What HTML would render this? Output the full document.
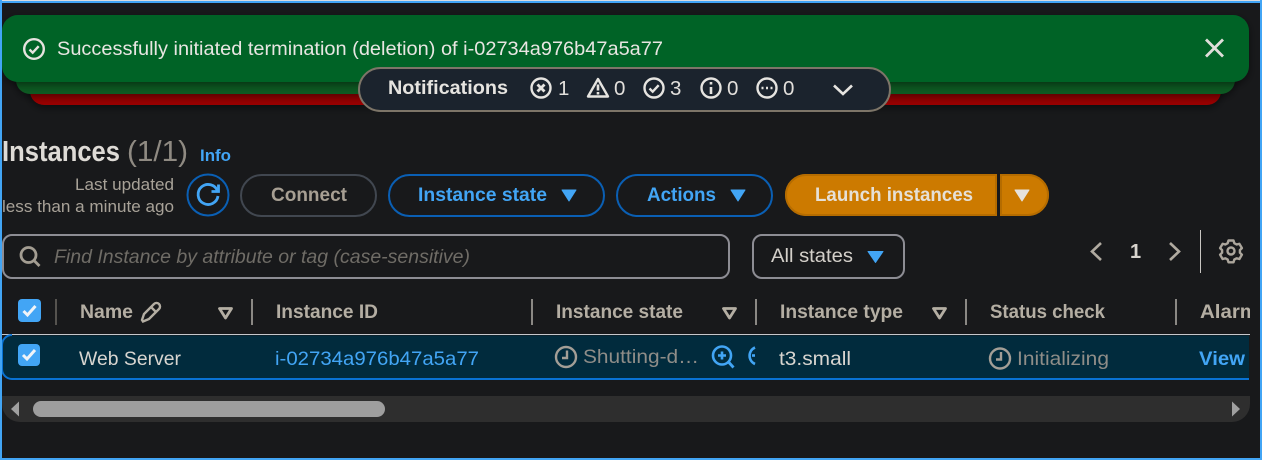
<!DOCTYPE html>
<html><head><meta charset="utf-8"><style>
html,body{margin:0;padding:0;background:#18191b;width:1262px;height:460px;overflow:hidden}
svg{display:block;position:absolute;left:0;top:0}
text{font-family:"Liberation Sans",sans-serif;font-size:19.5px}
.b{font-weight:700}
</style></head><body>
<svg width="1262" height="460" viewBox="0 0 1262 460" xmlns="http://www.w3.org/2000/svg">
<defs>
<filter id="s" x="-5%" y="-30%" width="110%" height="170%"><feDropShadow dx="0" dy="3" stdDeviation="4" flood-color="#000" flood-opacity=".45"/></filter>
<clipPath id="tbl"><rect x="0" y="290" width="1250" height="100"/></clipPath>
</defs>
<rect width="1262" height="460" fill="#18191b"/>
<!-- stacked flashes -->
<rect x="30" y="50" width="1191" height="55" rx="14" fill="#990000" filter="url(#s)"/>
<rect x="16" y="40" width="1219" height="54" rx="14" fill="#0b5a24" filter="url(#s)"/>
<rect x="2" y="15" width="1247" height="67" rx="16" fill="#016428" filter="url(#s)"/>
<circle cx="34" cy="49" r="9.800" fill="none" stroke="#e6e3df" stroke-width="2.400"/>
<path d="M29.500 49.500l3.200 3.200 6-6.500" fill="none" stroke="#e6e3df" stroke-width="2.400"/>
<text x="57" y="55" fill="#e8e6e2" textLength="606" lengthAdjust="spacingAndGlyphs">Successfully initiated termination (deletion) of i-02734a976b47a5a77</text>
<path d="M1206 39.500l17 17M1223 39.500l-17 17" stroke="#e0deda" stroke-width="2.800" fill="none"/>
<!-- notifications pill -->
<rect x="359" y="68" width="531" height="43" rx="21.500" fill="#1b232d" stroke="#7d7568" stroke-width="2"/>
<text class="b" x="388" y="94" fill="#e6e4e0" textLength="120" lengthAdjust="spacingAndGlyphs">Notifications</text>
<g fill="none" stroke="#e6e4e0" stroke-width="2.400">
<circle cx="541" cy="88" r="9.500"/><path d="M537.500 84.500l7 7M544.500 84.500l-7 7" stroke-width="2.800"/>
<path d="M598 79l10 17.500h-20z" stroke-linejoin="round"/><path d="M598 84.500v6M598 92v2.500" stroke-width="2.600"/>
<circle cx="654" cy="88" r="9.500"/><path d="M649.500 88.500l3.200 3.200 6-6.500"/>
<circle cx="711" cy="88" r="9.500"/><path d="M711 87v7M711 82v2.500" stroke-width="2.600"/>
<circle cx="767" cy="88" r="9.500"/><path d="M761.500 88h2M766 88h2M770.500 88h2" stroke-width="2.600"/>
<path d="M834 85.500l9 8.500 9-8.500" stroke-width="2.600"/>
</g>
<g fill="#e2dfdb"><text x="558" y="95" style="font-size:20.500px">1</text><text x="614" y="95" style="font-size:20.500px">0</text><text x="670" y="95" style="font-size:20.500px">3</text><text x="727" y="95" style="font-size:20.500px">0</text><text x="783" y="95" style="font-size:20.500px">0</text></g>
<!-- heading -->
<text class="b" x="2" y="161" fill="#dedbd6" style="font-size:29px" textLength="118" lengthAdjust="spacingAndGlyphs">Instances</text>
<text x="127" y="161" fill="#8f8a82" style="font-size:29px" textLength="61" lengthAdjust="spacingAndGlyphs">(1/1)</text>
<text class="b" x="200" y="161" fill="#42a5f5" style="font-size:17px" textLength="31" lengthAdjust="spacingAndGlyphs">Info</text>
<text x="75" y="190" fill="#a8a298" style="font-size:17px" textLength="99" lengthAdjust="spacingAndGlyphs">Last updated</text>
<text x="2" y="212" fill="#a8a298" style="font-size:17px" textLength="172" lengthAdjust="spacingAndGlyphs">less than a minute ago</text>
<!-- buttons -->
<circle cx="208" cy="195" r="20.500" fill="none" stroke="#0a5fb4" stroke-width="2"/>
<path d="M217.500 191a10 10 0 1 0 .5 5" fill="none" stroke="#42a5f5" stroke-width="2.800"/>
<path d="M218.500 184.500v7h-7" fill="none" stroke="#42a5f5" stroke-width="2.800"/>
<rect x="241" y="175" width="135" height="41" rx="20.500" fill="none" stroke="#414750" stroke-width="2"/>
<text class="b" x="271" y="201" fill="#a79f93" textLength="76" lengthAdjust="spacingAndGlyphs">Connect</text>
<rect x="389" y="175" width="215" height="41" rx="20.500" fill="none" stroke="#0a5fb4" stroke-width="2"/>
<text class="b" x="418" y="201" fill="#42a5f5" textLength="129" lengthAdjust="spacingAndGlyphs">Instance state</text>
<path d="M562 190h14l-7 11z" fill="#42a5f5" stroke="#42a5f5" stroke-linejoin="round"/>
<rect x="617" y="175" width="155" height="41" rx="20.500" fill="none" stroke="#0a5fb4" stroke-width="2"/>
<text class="b" x="647" y="201" fill="#42a5f5" textLength="69" lengthAdjust="spacingAndGlyphs">Actions</text>
<path d="M731 190h14l-7 11z" fill="#42a5f5" stroke="#42a5f5" stroke-linejoin="round"/>
<path d="M997 174h-191a21 21 0 0 0 0 42h191z" fill="#cc7a00"/>
<path d="M1000 174h28a21 21 0 0 1 0 42h-28z" fill="#cc7a00"/>
<path d="M996 175h-190a20 20 0 0 0 0 40h190zM1001 175h27a20 20 0 0 1 0 40h-27z" fill="none" stroke="#b56c00" stroke-width="2"/>
<text class="b" x="815" y="201" fill="#e6e0d6" textLength="158" lengthAdjust="spacingAndGlyphs">Launch instances</text>
<path d="M1015 190h14l-7 11z" fill="#e6e2dc" stroke="#e6e2dc" stroke-linejoin="round"/>
<!-- search row -->
<rect x="3" y="235" width="726" height="43" rx="9" fill="none" stroke="#8d8d94" stroke-width="2"/>
<circle cx="28.500" cy="255" r="7.500" fill="none" stroke="#a39d92" stroke-width="2.800"/>
<path d="M34 260.500l5.500 5.500" stroke="#a39d92" stroke-width="2.800" fill="none"/>
<text x="54" y="263" fill="#6f6c66" font-style="italic" textLength="416" lengthAdjust="spacingAndGlyphs">Find Instance by attribute or tag (case-sensitive)</text>
<rect x="753" y="235" width="151" height="43" rx="9" fill="none" stroke="#8d8d94" stroke-width="2"/>
<text x="771" y="262" fill="#d4d0ca" textLength="82" lengthAdjust="spacingAndGlyphs">All states</text>
<path d="M868 251.500h15l-7.500 11z" fill="#42a5f5" stroke="#42a5f5" stroke-linejoin="round"/>
<!-- pagination -->
<path d="M1101 243l-9 8.500 9 8.500M1170 243l9 8.500-9 8.500" fill="none" stroke="#b0aaa0" stroke-width="2.600"/>
<text class="b" x="1130" y="258" fill="#d8d4ce" style="font-size:20px">1</text>
<rect x="1200" y="230" width="1" height="43" fill="#c8c6c2"/>
<g fill="none" stroke="#aca69c" stroke-width="2.400">
<circle cx="1231" cy="251" r="3.500"/>
<path d="M1228.500 241.500h5l.8 2.700 2.300 1.300 2.800-.7 2.500 4.300-2 2 0 2.600 2 2-2.500 4.300-2.800-.7-2.300 1.300-.8 2.700h-5l-.8-2.700-2.300-1.300-2.800.7-2.500-4.300 2-2 0-2.600-2-2 2.500-4.300 2.800.7 2.300-1.300z" stroke-linejoin="round" transform="translate(0,-1)"/>
</g>
<!-- table header -->
<g clip-path="url(#tbl)">
<rect x="18" y="299" width="23" height="23" rx="4" fill="#42a5f5"/>
<path d="M23.500 311l4 4 8-9" fill="none" stroke="#f0f4f8" stroke-width="3"/>
<g fill="#55534f"><rect x="55" y="299" width="2" height="26"/></g>
<g fill="#8a8884"><rect x="251" y="299" width="2" height="26"/><rect x="531" y="299" width="2" height="26"/><rect x="755" y="299" width="2" height="26"/><rect x="965" y="299" width="2" height="26"/><rect x="1175" y="299" width="2" height="26"/></g>
<g fill="#b4aea3">
<text class="b" x="80" y="318" textLength="53" lengthAdjust="spacingAndGlyphs">Name</text>
<text class="b" x="276" y="318" textLength="102" lengthAdjust="spacingAndGlyphs">Instance ID</text>
<text class="b" x="556" y="318" textLength="127" lengthAdjust="spacingAndGlyphs">Instance state</text>
<text class="b" x="780" y="318" textLength="123" lengthAdjust="spacingAndGlyphs">Instance type</text>
<text class="b" x="990" y="318" textLength="115" lengthAdjust="spacingAndGlyphs">Status check</text>
<text class="b" x="1200" y="318" textLength="58" lengthAdjust="spacingAndGlyphs">Alarm</text>
</g>
<path d="M142 320l2-6 10-10a3 3 0 0 1 5 5l-10 10-6 2.500zM151 307l5 5" fill="none" stroke="#b4aea3" stroke-width="2.400"/>
<path d="M219.500 308.500h12l-6 9.500z" fill="none" stroke="#b4aea3" stroke-width="2.800" stroke-linejoin="round"/>
<path d="M723.500 308.500h12l-6 9.500z" fill="none" stroke="#b4aea3" stroke-width="2.800" stroke-linejoin="round"/>
<path d="M933.500 308.500h12l-6 9.500z" fill="none" stroke="#b4aea3" stroke-width="2.800" stroke-linejoin="round"/>
</g>
<rect x="2" y="334" width="1248" height="1" fill="#c6c8cc"/>
<!-- selected row -->
<path d="M1249 335.500H12a10 10 0 0 0-10 10v24a10 10 0 0 0 10 10h1237z" fill="#012b3d"/>
<path d="M1249 379H12a10 10 0 0 1-10-10v-24a10 10 0 0 1 10-10" fill="none" stroke="#0972d3" stroke-width="2"/>
<rect x="18" y="344" width="22" height="22" rx="4" fill="#42a5f5"/>
<path d="M23 355l4 4 8-9" fill="none" stroke="#f0f4f8" stroke-width="3"/>
<text x="79" y="365" fill="#d8d5d0" textLength="102" lengthAdjust="spacingAndGlyphs">Web Server</text>
<text x="275" y="365" fill="#42a5f5" textLength="204" lengthAdjust="spacingAndGlyphs">i-02734a976b47a5a77</text>
<circle cx="566" cy="357" r="10" fill="none" stroke="#a39e96" stroke-width="2.400"/>
<path d="M567 350.500v7.500h-5" fill="none" stroke="#a39e96" stroke-width="2.400"/>
<text x="583" y="363" fill="#8f8d88" textLength="116" lengthAdjust="spacingAndGlyphs">Shutting-d…</text>
<circle cx="722" cy="355.500" r="9" fill="none" stroke="#42a5f5" stroke-width="2.600"/>
<path d="M728.500 362l5 5.500" stroke="#42a5f5" stroke-width="2.800" fill="none"/>
<path d="M718 355.500h8M722 351.500v8" stroke="#42a5f5" stroke-width="2.600" fill="none"/>
<path d="M755 347.500a9 9 0 0 0 0 16.500" fill="none" stroke="#42a5f5" stroke-width="2.600"/>
<path d="M752 355.500h3" stroke="#42a5f5" stroke-width="2.600"/>
<text x="779" y="365" fill="#d8d5d0" textLength="72" lengthAdjust="spacingAndGlyphs">t3.small</text>
<circle cx="1000" cy="358.500" r="10" fill="none" stroke="#a39e96" stroke-width="2.400"/>
<path d="M1001 352v7.500h-5" fill="none" stroke="#a39e96" stroke-width="2.400"/>
<text x="1017" y="365" fill="#8f8d88" textLength="92" lengthAdjust="spacingAndGlyphs">Initializing</text>
<text class="b" x="1199" y="365" fill="#42a5f5" textLength="46" lengthAdjust="spacingAndGlyphs">View</text>
<!-- scrollbar -->
<path d="M2 396h1248v8a18 18 0 0 1-18 18H20a18 18 0 0 1-18-18z" fill="#2e2e2e"/>
<rect x="33" y="401" width="352" height="16" rx="8" fill="#9e9e9e"/>
<path d="M19 401.500v15l-8-7.500z" fill="#a0a0a0"/>
<path d="M1232 401.500v15l8-7.500z" fill="#a0a0a0"/>
<!-- window border -->
<rect x="0" y="0" width="1262" height="1" fill="#d8dce0"/>
<rect x="0" y="1" width="1262" height="2" fill="#42a5f5"/>
<rect x="0" y="0" width="2" height="460" fill="#42a5f5"/>
<rect x="1260" y="0" width="2" height="460" fill="#42a5f5"/>
<rect x="0" y="458" width="1262" height="2" fill="#42a5f5"/>
</svg>
</body></html>
